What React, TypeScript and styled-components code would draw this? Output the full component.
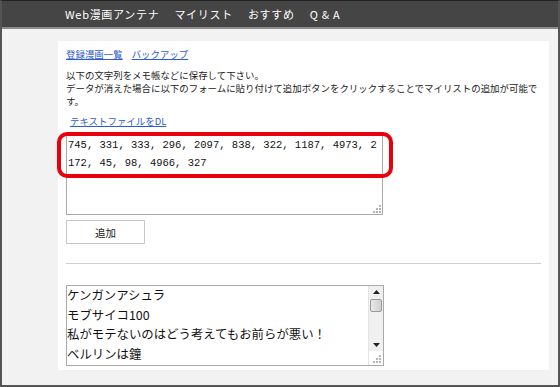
import styled, { createGlobalStyle } from 'styled-components';

const GlobalStyle = createGlobalStyle`
  html, body {
    margin: 0;
    padding: 0;
    background: #f2f2f2;
  }
  body {
    font-family: "Noto Sans CJK JP", "Noto Sans", sans-serif;
  }
`;

const Frame = styled.div`
  box-sizing: border-box;
  width: 560px;
  height: 387px;
  border: 2px solid #555;
  border-top: 1px solid #222;
  background: #f2f2f2;
  overflow: hidden;
`;

const NavBar = styled.nav`
  height: 26px;
  background: #454545;
  border-bottom: 2px solid #8c8c8c;
  display: flex;
  align-items: center;
  gap: 15px;
  padding-left: 63px;
`;

const NavItem = styled.a`
  color: #fff;
  font-size: 11px;
  letter-spacing: 0.7px;
  line-height: 26px;
  text-decoration: none;
  white-space: pre;
`;

const Card = styled.main`
  box-sizing: border-box;
  width: 491px;
  margin: 12px 0 0 56px;
  padding: 6px 8px 4px;
  background: #fff;
  color: #222;
  font-size: 9.45px;
  line-height: 13px;
`;

const LinkRow = styled.div`
  display: flex;
  gap: 9px;
  line-height: 14px;
`;

const TextLink = styled.a<{ $indent?: number }>`
  color: #2d5bd0;
  text-decoration: underline;
  margin-left: ${(p) => p.$indent ?? 0}px;
`;

const Note = styled.p`
  margin: 8px 0 0;
`;

const DownloadRow = styled.div`
  margin-top: 6px;
  line-height: 14px;
`;

const DataBox = styled.div`
  position: relative;
  width: 317px;
  margin-top: 7px;
`;

const DataText = styled.textarea`
  display: block;
  box-sizing: border-box;
  width: 317px;
  height: 80px;
  margin: 0;
  padding: 0 1px;
  border: 1px solid #a9a9a9;
  font-family: "Liberation Mono", monospace;
  font-size: 10.5px;
  line-height: 18px;
  color: #111;
  resize: none;
  word-break: break-all;
  overflow: hidden;
  outline: none;
`;

const Highlight = styled.div`
  position: absolute;
  left: -9px;
  top: -3px;
  width: 336px;
  height: 46px;
  box-sizing: border-box;
  border: 4px solid #e8000d;
  border-radius: 10px;
  pointer-events: none;
`;

const Grip = styled.svg`
  position: absolute;
  right: 2px;
  bottom: 2px;
`;

const AddButton = styled.button`
  display: block;
  box-sizing: border-box;
  width: 79px;
  height: 24px;
  margin-top: 5px;
  padding: 0;
  background: #fff;
  border: 1px solid #c9c9c9;
  font-family: inherit;
  font-size: 10.5px;
  color: #222;
`;

const Divider = styled.hr`
  margin: 19px 0 0;
  border: 0;
  border-top: 1px solid #cfcfcf;
`;

const ListBox = styled.div`
  display: flex;
  box-sizing: border-box;
  width: 318px;
  height: 81px;
  margin-top: 21px;
  border: 1px solid #a9a9a9;
  background: #fff;
`;

const ListItems = styled.div`
  flex: 1;
  overflow: hidden;
  font-size: 12.4px;
  line-height: 19.5px;
  color: #111;
`;

const ScrollColumn = styled.div`
  width: 14px;
  display: flex;
  flex-direction: column;
  background: #f0f0f0;
  border-left: 1px solid #e4e4e4;
`;

const ArrowButton = styled.div`
  height: 12px;
  display: flex;
  align-items: center;
  justify-content: center;
`;

const Thumb = styled.div`
  height: 13px;
  margin: 1px 1px 0;
  box-sizing: border-box;
  border: 1px solid #999;
  border-radius: 2px;
  background: linear-gradient(to right, #e8e8e8, #d0d0d0);
`;

const Track = styled.div`
  flex: 1;
`;

const Corner = styled.div`
  height: 14px;
  background: #fff;
  position: relative;
`;

const titles = [
  'ケンガンアシュラ',
  'モブサイコ100',
  '私がモテないのはどう考えてもお前らが悪い！',
  'ベルリンは鐘',
];

const ids = '745, 331, 333, 296, 2097, 838, 322, 1187, 4973, 2172, 45, 98, 4966, 327';

const GripDots = () => (
  <Grip width="8" height="8" viewBox="0 0 8 8">
    <rect x="6" y="0" width="2" height="2" fill="#b5b5b5" />
    <rect x="3" y="3" width="2" height="2" fill="#b5b5b5" />
    <rect x="6" y="3" width="2" height="2" fill="#b5b5b5" />
    <rect x="0" y="6" width="2" height="2" fill="#b5b5b5" />
    <rect x="3" y="6" width="2" height="2" fill="#b5b5b5" />
    <rect x="6" y="6" width="2" height="2" fill="#b5b5b5" />
  </Grip>
);

const Arrow = ({ up }: { up?: boolean }) => (
  <svg width="7" height="4" viewBox="0 0 7 4">
    <polygon points={up ? '0,4 7,4 3.5,0' : '0,0 7,0 3.5,4'} fill="#222" />
  </svg>
);

const App = () => (
  <>
    <GlobalStyle />
    <Frame>
      <NavBar>
        <NavItem>Web漫画アンテナ</NavItem>
        <NavItem>マイリスト</NavItem>
        <NavItem>おすすめ</NavItem>
        <NavItem>Q &amp; A</NavItem>
      </NavBar>
      <Card>
        <LinkRow>
          <TextLink href="#">登録漫画一覧</TextLink>
          <TextLink href="#">バックアップ</TextLink>
        </LinkRow>
        <Note>
          以下の文字列をメモ帳などに保存して下さい。
          <br />
          データが消えた場合に以下のフォームに貼り付けて追加ボタンをクリックすることでマイリストの追加が可能です。
        </Note>
        <DownloadRow>
          <TextLink href="#" $indent={4}>テキストファイルをDL</TextLink>
        </DownloadRow>
        <DataBox>
          <DataText defaultValue={ids} />
          <GripDots />
          <Highlight />
        </DataBox>
        <AddButton>追加</AddButton>
        <Divider />
        <ListBox>
          <ListItems>
            {titles.map((title) => (
              <div key={title}>{title}</div>
            ))}
          </ListItems>
          <ScrollColumn>
            <ArrowButton><Arrow up /></ArrowButton>
            <Thumb />
            <Track />
            <ArrowButton><Arrow /></ArrowButton>
            <Corner><GripDots /></Corner>
          </ScrollColumn>
        </ListBox>
      </Card>
    </Frame>
  </>
);

export default App;
